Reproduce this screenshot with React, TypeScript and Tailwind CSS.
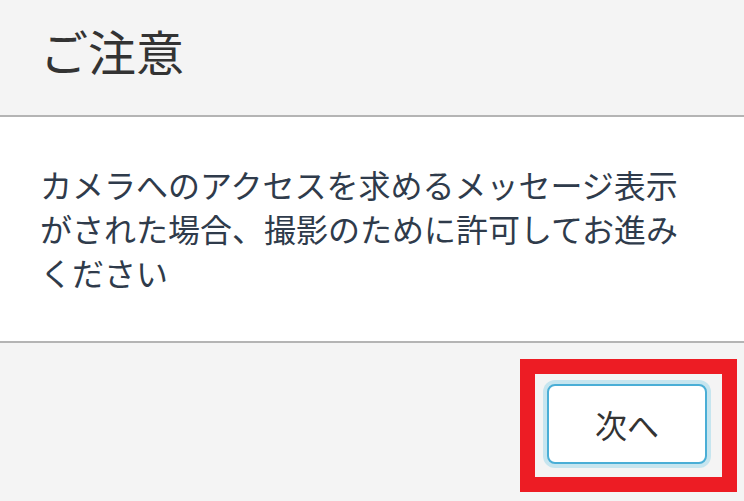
export default function App() {
  return (
    <div
      className="w-[744px] h-[501px] flex flex-col bg-[#f4f4f4] overflow-hidden"
      style={{ fontFamily: '"Noto Sans CJK JP", "Noto Sans", sans-serif' }}
    >
      <div className="h-[117px] shrink-0 flex items-center px-10 pb-4 border-b-2 border-[#b4b4b4] bg-[#f4f4f4]">
        <h1 className="text-[48px] leading-none text-[#333333] font-normal">ご注意</h1>
      </div>
      <div className="h-[226px] shrink-0 flex items-center px-10 bg-white border-b-2 border-[#b4b4b4]">
        <p className="text-[32px] leading-[44px] text-[#2f3b4b] pb-[3px]">
          カメラへのアクセスを求めるメッセージ表示がされた場合、撮影のために許可してお進みください
        </p>
      </div>
      <div className="flex-1 flex justify-end items-start pt-4 pr-[7px]">
        <div className="border-[15px] border-[#ed1c24] pt-[10px] pl-3 pr-[15px] pb-[13px]">
          <button className="w-[160px] h-[80px] rounded-lg border-2 border-[#4aaed6] bg-white text-[32px] leading-none text-[#333333] shadow-[0_0_0_4px_#c6e5ef]">
            次へ
          </button>
        </div>
      </div>
    </div>
  );
}
